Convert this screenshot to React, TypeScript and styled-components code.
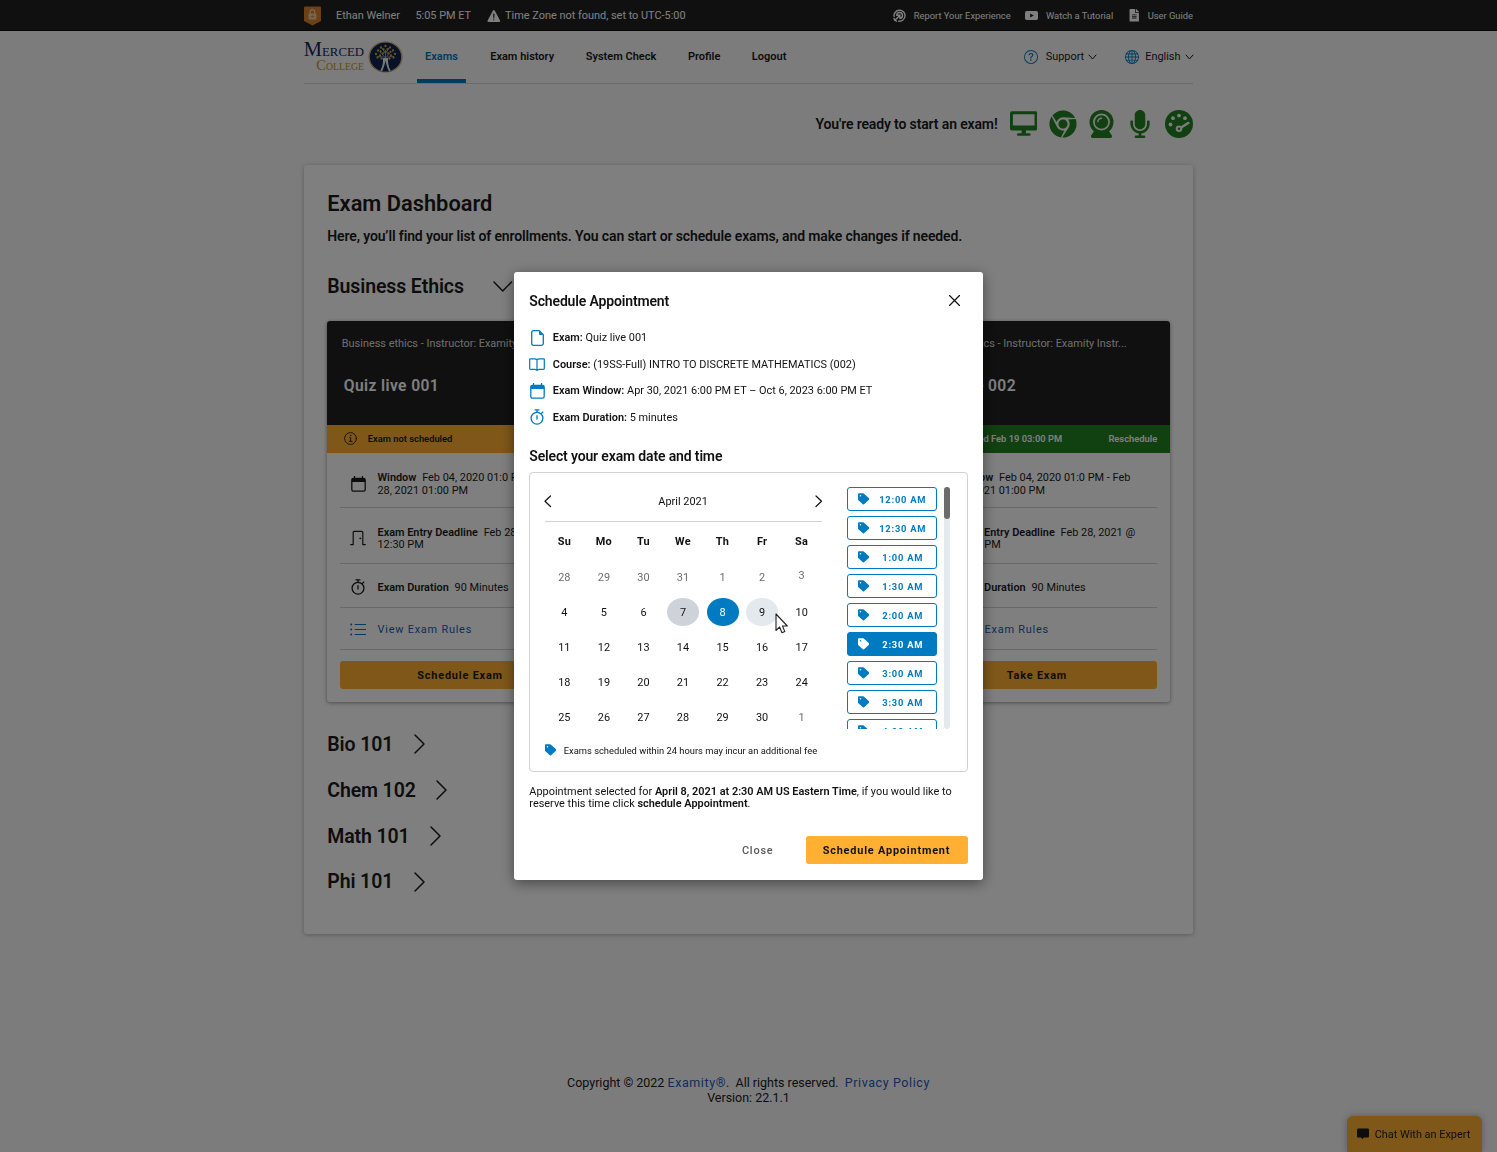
import React from "react";
import styled, { createGlobalStyle, css } from "styled-components";
import { BsQuestionCircle, BsGlobe } from "react-icons/bs";
import { FaChrome, FaFileAlt, FaMicrophone } from "react-icons/fa";
import { IoWarning } from "react-icons/io5";

const blue = "#007ac0";
const amber = "#ffb033";
const green = "#228022";
const ink = "#1a1a1a";
const linkBlue = "#2358b8";

const GlobalStyle = createGlobalStyle`
  * { box-sizing: border-box; }
  body {
    margin: 0;
    background: #f8f8f8;
    font-family: Roboto, "Liberation Sans", sans-serif;
    font-size: 10.92px;
    color: ${ink};
    overflow: hidden;
  }
  button { font-family: inherit; border: 0; margin: 0; padding: 0; background: none; color: inherit; }
  svg { display: block; flex: none; }
`;

const Page = styled.div`
  height: 1152px;
  display: flex;
  flex-direction: column;
`;

const Container = styled.div`
  width: 889px;
  margin: 0 auto;
`;

const TopBar = styled.div`
  height: 31px;
  flex: none;
  background: #212121;
  border-bottom: 1px solid #0c0c0c;
  color: #fff;
`;

const TopInner = styled(Container)`
  height: 31px;
  display: flex;
  align-items: center;
`;

const TopText = styled.span<{ $gap?: number }>`
  margin-right: ${(p) => p.$gap ?? 0}px;
  white-space: nowrap;
`;

const WarningMark = styled(IoWarning)`
  margin: 0 3px 0 -1px;
`;

const TopLinks = styled.div`
  margin-left: auto;
  display: flex;
  align-items: center;
  gap: 14.8px;
  font-size: 9.36px;
`;

const TopLink = styled.a<{ $gap: number }>`
  display: flex;
  align-items: center;
  gap: ${(p) => p.$gap}px;
  white-space: nowrap;
`;

const Header = styled(Container)`
  height: 53px;
  flex: none;
  display: flex;
  border-bottom: 1px solid #d4d4d8;
`;

const Logo = styled.div`
  width: 99px;
  display: flex;
  align-items: center;
  gap: 4px;
`;

const LogoWords = styled.div`
  width: 60px;
  display: flex;
  flex-direction: column;
  align-items: flex-end;
  font-family: "Liberation Serif", serif;
  white-space: nowrap;
`;

const LogoWord = styled.div<{ $gold?: boolean }>`
  color: ${(p) => (p.$gold ? "#c79426" : "#12265c")};
  font-size: ${(p) => (p.$gold ? 9.8 : 12.8)}px;
  line-height: ${(p) => (p.$gold ? 10 : 15)}px;
`;

const LogoCap = styled.span<{ $size: number }>`
  font-size: ${(p) => p.$size}px;
`;

const Nav = styled.nav`
  display: flex;
  margin-left: 14px;
`;

const NavItem = styled.a<{ $active?: boolean; $gap: number }>`
  display: flex;
  align-items: center;
  justify-content: center;
  height: 52px;
  padding: 3px 8px 0;
  margin-right: ${(p) => p.$gap}px;
  font-size: 11px;
  font-weight: 600;
  white-space: nowrap;
  color: ${(p) => (p.$active ? "#0077bd" : ink)};
  border-bottom: 4px solid ${(p) => (p.$active ? "#0077bd" : "transparent")};
`;

const HeaderTools = styled.div`
  margin-left: auto;
  display: flex;
  gap: 28px;
  height: 51px;
  align-items: center;
`;

const Tool = styled.a<{ $gap: number }>`
  display: flex;
  align-items: center;
  & > svg:first-child { color: ${blue}; margin-right: ${(p) => p.$gap}px; }
  & > svg:last-child { margin: 0 0.5px 0 5px; }
`;

const ReadyRow = styled(Container)`
  flex: none;
  height: 81px;
  padding-bottom: 1.5px;
  display: flex;
  align-items: center;
  justify-content: flex-end;
  color: ${green};
`;

const ReadyText = styled.span`
  font-size: 14px;
  font-weight: 600;
  letter-spacing: -0.14px;
  color: ${ink};
  margin-right: 12px;
`;

const ReadyIcons = styled.div`
  display: flex;
  align-items: center;
  justify-content: space-between;
  width: 183.5px;
`;

const MicrophoneMark = styled(FaMicrophone)`
  margin: 0 -1px 0 0.5px;
`;

const Panel = styled(Container)`
  flex: none;
  height: 769px;
  background: #fff;
  border-radius: 3px;
  box-shadow: 0 1px 4px rgba(60, 60, 90, 0.35);
  padding: 24px 23.3px 0;
`;

const PageTitle = styled.h1`
  margin: 0;
  font-size: 21.84px;
  line-height: 30px;
  font-weight: 600;
`;

const PageLead = styled.p`
  margin: 9px 0 0;
  font-size: 14px;
  line-height: 16px;
  font-weight: 600;
  letter-spacing: -0.13px;
  white-space: nowrap;
`;

const SectionHead = styled.h2<{ $top: number; $gap: number }>`
  margin: ${(p) => p.$top}px 0 0;
  height: 26px;
  display: flex;
  align-items: center;
  gap: ${(p) => p.$gap}px;
  font-size: 19.5px;
  letter-spacing: -0.12px;
  font-weight: 600;
`;

const CardGrid = styled.div`
  margin-top: 22px;
  display: grid;
  grid-template-columns: repeat(3, 265.5px);
  justify-content: space-between;
`;

const Card = styled.article<{ $column: number }>`
  grid-column: ${(p) => p.$column};
  height: 380.5px;
  border-radius: 3px;
  overflow: hidden;
  box-shadow: 0 1px 4px rgba(0, 0, 0, 0.4);
`;

const CardTop = styled.div`
  height: 104px;
  background: #212121;
  color: #fff;
  padding: 16px 14.5px 0;
`;

const CardCourse = styled.div`
  line-height: 14px;
  white-space: nowrap;
  color: #ddd;
`;

const CardTitle = styled.h3`
  margin: 24px 0 0 2px;
  font-size: 15.6px;
  line-height: 22px;
  font-weight: 600;
  letter-spacing: 0.4px;
`;

const Status = styled.div<{ $scheduled?: boolean }>`
  height: 28px;
  display: flex;
  align-items: center;
  padding: 0 12.5px 1px 16.5px;
  font-size: 9.36px;
  font-weight: 600;
  white-space: nowrap;
  background: ${(p) => (p.$scheduled ? green : amber)};
  color: ${(p) => (p.$scheduled ? "#fff" : ink)};
  & > svg { margin-right: 11px; }
`;

const StatusAction = styled.span`
  margin-left: auto;
`;

const CardBody = styled.div`
  padding: 0 12.5px;
`;

const CardRow = styled.div<{ $height: number; $drop: number }>`
  height: ${(p) => p.$height}px;
  padding: ${(p) => p.$drop}px 0 0 10px;
  border-bottom: 1px solid #d0d0d0;
  display: flex;
  align-items: center;
  line-height: 12.4px;
`;

const RowIcon = styled.span<{ $lift?: number; $tint?: string }>`
  width: 16.5px;
  margin: 0 11.2px ${(p) => p.$lift ?? 0}px 0;
  display: flex;
  justify-content: center;
  color: ${(p) => p.$tint ?? ink};
`;

const Label = styled.b`
  font-weight: 600;
  margin-right: 5.8px;
`;

const RulesLink = styled.a`
  color: ${linkBlue};
  letter-spacing: 0.78px;
`;

const CardButton = styled.button`
  width: 100%;
  height: 28px;
  margin-top: 11.5px;
  background: ${amber};
  border-radius: 3px;
  font-size: 10.92px;
  font-weight: 700;
  letter-spacing: 0.8px;
`;

const Footer = styled.footer`
  margin-top: 141px;
  text-align: center;
  font-size: 12.48px;
  line-height: 15px;
`;

const FooterLink = styled.a`
  color: ${linkBlue};
  letter-spacing: 0.6px;
`;

const ChatTab = styled.button`
  position: fixed;
  right: 15.5px;
  bottom: 0;
  width: 135px;
  height: 36px;
  display: flex;
  align-items: center;
  justify-content: center;
  gap: 6px;
  padding-right: 1px;
  border-radius: 6px 6px 0 0;
  background: ${amber};
  color: ${ink};
  font-size: 10.92px;
  box-shadow: 0 0 6px rgba(40, 50, 90, 0.35);
`;

const Backdrop = styled.div`
  position: fixed;
  inset: 0;
  background: rgba(0, 0, 0, 0.5);
  display: flex;
  align-items: center;
  justify-content: center;
`;

const Dialog = styled.div`
  width: 469px;
  height: 608px;
  background: #fff;
  border-radius: 3px;
  box-shadow: 0 3px 14px rgba(0, 0, 0, 0.45);
  padding: 17.5px 15.5px 0 15.3px;
  color: #111;
`;

const DialogHead = styled.div`
  height: 22px;
  display: flex;
  align-items: center;
  justify-content: space-between;
  padding-right: 7.5px;
`;

const DialogTitle = styled.h2`
  margin: 0;
  font-size: 14px;
  font-weight: 600;
  letter-spacing: -0.15px;
`;

const Facts = styled.div`
  margin-top: 13px;
  display: grid;
  grid-auto-rows: 26.5px;
`;

const Fact = styled.div`
  display: flex;
  align-items: center;
  white-space: pre;
`;

const FactIcon = styled.span`
  width: 15.6px;
  margin-right: 7.9px;
  display: flex;
  justify-content: center;
  color: ${blue};
`;

const Strong = styled.b`
  font-weight: 600;
`;

const PickHeading = styled.h3`
  margin: 15px 0 0;
  font-size: 14px;
  line-height: 20px;
  font-weight: 600;
  letter-spacing: -0.15px;
`;

const Picker = styled.div`
  margin-top: 6.2px;
  height: 300px;
  border: 1px solid #d2d2d2;
  border-radius: 4px;
  padding: 14.2px 16px 0 14.3px;
`;

const PickerMain = styled.div`
  display: flex;
  height: 242.5px;
`;

const Calendar = styled.div`
  width: 277.5px;
  margin-right: 24.7px;
`;

const MonthBar = styled.div`
  height: 35.5px;
  display: flex;
  align-items: center;
  justify-content: space-between;
  padding: 0 1px 5px 0.5px;
  border-bottom: 1px solid #d2d2d2;
`;

const Week = styled.div<{ $head?: boolean }>`
  display: grid;
  grid-template-columns: repeat(7, 39.55px);
  height: ${(p) => (p.$head ? 37.2 : 35.1)}px;
  ${(p) =>
    p.$head &&
    css`
      padding-top: 1.5px;
      font-weight: 700;
      letter-spacing: 0.3px;
    `}
`;

const Cell = styled.div`
  display: flex;
  align-items: center;
  justify-content: center;
  position: relative;
`;

type Tone = "plain" | "muted" | "today" | "selected" | "hover";
const toneFill: Record<Tone, string> = {
  plain: "transparent",
  muted: "transparent",
  today: "#ced3da",
  selected: blue,
  hover: "#e4e9ee",
};

const Day = styled.button<{ $tone: Tone; $raise?: boolean }>`
  width: 32px;
  height: 27.5px;
  border-radius: 50%;
  font-size: 10.92px;
  background: ${(p) => toneFill[p.$tone]};
  color: ${(p) => (p.$tone === "selected" ? "#fff" : p.$tone === "muted" ? "#6d6d6d" : "#111")};
  ${(p) => p.$raise && "margin-bottom: 3px;"}
`;

const Cursor = styled.svg`
  position: absolute;
  left: 32.7px;
  top: 18px;
  z-index: 1;
`;

const Times = styled.div`
  width: 90px;
  height: 242px;
  overflow: hidden;
  display: flex;
  flex-direction: column;
  gap: 4.5px;
`;

const TimeSlot = styled.button<{ $on?: boolean }>`
  flex: none;
  height: 24.5px;
  border: 1px solid ${blue};
  border-radius: 3px;
  background: ${(p) => (p.$on ? blue : "#fff")};
  color: ${(p) => (p.$on ? "#fff" : blue)};
  display: flex;
  align-items: center;
  padding: 0 1px 0 10px;
  font-size: 9.36px;
  font-weight: 700;
  letter-spacing: 0.78px;
`;

const SlotTime = styled.span`
  flex: 1;
  padding-left: 1.5px;
  text-align: center;
`;

const Track = styled.div`
  width: 6px;
  height: 242px;
  margin-left: 7.3px;
  border-radius: 3px;
  background: #e4e9ee;
`;

const Thumb = styled.div`
  height: 32px;
  border-radius: 3px;
  background: #6b6b6b;
`;

const FeeNote = styled.div`
  margin-top: 13.7px;
  display: flex;
  align-items: center;
  gap: 7.7px;
  font-size: 9.36px;
  height: 14px;
  color: #111;
`;

const FeeMark = styled.span`
  color: ${blue};
`;

const Summary = styled.p`
  margin: 14.3px 0 0;
  line-height: 12.5px;
  white-space: nowrap;
`;

const Actions = styled.div`
  margin-top: 25.2px;
  display: flex;
  justify-content: flex-end;
  gap: 32px;
`;

const ActionButton = styled.button<{ $primary?: boolean }>`
  height: 28px;
  width: ${(p) => (p.$primary ? "162px" : "auto")};
  border-radius: 3px;
  font-size: 10.92px;
  font-weight: ${(p) => (p.$primary ? 700 : 500)};
  letter-spacing: 0.8px;
  background: ${(p) => (p.$primary ? amber : "none")};
  color: ${(p) => (p.$primary ? "#111" : "#5a5a5a")};
`;

type Direction = "left" | "right" | "down";
const chevronPaths: Record<Direction, string> = {
  left: "M1 0 L0 .5 L1 1",
  right: "M0 0 L1 .5 L0 1",
  down: "M0 0 L.5 1 L1 0",
};

function Chevron({ dir, w, h, stroke = 1.2 }: { dir: Direction; w: number; h: number; stroke?: number }) {
  return (
    <svg width={w} height={h} overflow="visible">
      <path
        d={chevronPaths[dir]}
        transform={`scale(${w} ${h})`}
        fill="none"
        stroke="currentColor"
        strokeWidth={stroke}
        vectorEffect="non-scaling-stroke"
        strokeLinecap="round"
        strokeLinejoin="round"
      />
    </svg>
  );
}

const Shield = styled.svg`
  margin-right: 15px;
`;

const ShieldIcon = () => (
  <Shield width="17" height="20" viewBox="0 0 17 20">
    <path d="M0 1.5Q0 .5 1 .5H16Q17 .5 17 1.5V15L8.5 19.5L0 15Z" fill="#d9822c" />
    <path d="M6.2 8V6a2.300 2.300 0 0 1 4.600 0V8" fill="none" stroke="#e8cfae" strokeWidth="1.200" />
    <rect x="4.600" y="7.600" width="7.800" height="6" rx="1" fill="#e8cfae" />
    <path d="M8.500 9.200v2.600M6.500 10.600h4" stroke="#d9822c" strokeWidth=".8" />
  </Shield>
);

const ReportIcon = () => (
  <svg width="13" height="13" viewBox="0 0 13 13" fill="none" stroke="#fff" strokeWidth="1.400" strokeLinecap="round">
    <path d="M1.100 7.500A5.500 5.500 0 1 1 5.600 12.100" />
    <path d="M3.700 6.300A2.900 2.900 0 1 1 7 9.300" />
    <path d="M6.700 6.500L2.200 11M4.300 6.300H6.900V8.800" />
    <path d="M1 9.600L1.800 11.300L3.500 12.100" />
  </svg>
);

const VideoIcon = () => (
  <svg width="13" height="9" viewBox="0 0 13 9">
    <rect width="13" height="9" rx="1.800" fill="#fff" />
    <path d="M5.100 2.400L8.900 4.500L5.100 6.600Z" fill="#212121" />
  </svg>
);

const canopy: [number, number][] = [
  [8, 13], [10, 9.500], [13, 6.500], [17.500, 5], [22, 6.500], [25, 9.500], [27, 13], [9.500, 16.500], [25.500, 16.500],
  [12.500, 10.500], [15.500, 8.300], [19.500, 8.200], [22.500, 10.800], [12, 14.500], [23, 14.500], [15, 12.300], [20.200, 12.400],
  [17.500, 10.500], [13.500, 17.500], [21.500, 17.500],
];

const CrestIcon = () => (
  <svg width="35" height="32" viewBox="0 0 35 32">
    <ellipse cx="17.500" cy="16" rx="17" ry="15.600" fill="#c7a24a" />
    <ellipse cx="17.500" cy="16" rx="16.300" ry="15" fill="#d9cda4" />
    <ellipse cx="17.500" cy="16" rx="15.700" ry="14.500" fill="#0f2350" />
    <path d="M12.300 29.800C15 25 15.300 21 14.800 17h5.400C19.700 21 20 25 22.700 29.800Q17.500 31.300 12.300 29.800Z" fill="#f0f0f0" />
    <path d="M17.500 19.500C16.900 23 16.200 26 14 30.400H21C18.800 26 18.100 23 17.500 19.500Z" fill="#0f2350" />
    <path
      d="M17.500 18V9M17.500 17L12 11M17.500 17L23 11M15.500 16L9 15.500M19.500 16L26 15.500M17 12L14 7M18 12L21 7"
      stroke="#cfcfd6"
      strokeWidth=".7"
    />
    {canopy.map(([x, y]) => (
      <circle key={`${x}-${y}`} cx={x} cy={y} r="1.150" fill="#c9a43a" />
    ))}
  </svg>
);

const MonitorIcon = () => (
  <svg width="27.500" height="25" viewBox="0 0 28 25">
    <path
      fillRule="evenodd"
      d="M2 0H26Q28 0 28 2V17.500Q28 19.500 26 19.500H16.200V22.300H19.500Q21 22.300 21 23.700T19.500 25H8.500Q7 25 7 23.700T8.500 22.300H11.800V19.500H2Q0 19.500 0 17.500V2Q0 0 2 0ZM3 3V14.500H25V3Z"
      fill="currentColor"
    />
  </svg>
);

const WebcamIcon = () => (
  <svg width="25" height="28" viewBox="0 0 25 28">
    <path d="M5.500 20.500L2.300 25.300Q1.200 28 3.800 28H21.200Q23.800 28 22.700 25.300L19.500 20.500Z" fill="currentColor" />
    <circle cx="12.500" cy="12" r="12" fill="currentColor" />
    <circle cx="12.500" cy="12" r="7.600" fill="none" stroke="#f8f8f8" strokeWidth="1.700" />
    <path d="M8.900 11.800A3.600 3.600 0 0 1 12.500 8.200" fill="none" stroke="#f8f8f8" strokeWidth="1.500" strokeLinecap="round" />
  </svg>
);

const GaugeIcon = () => (
  <svg width="28" height="28" viewBox="0 0 28 28">
    <circle cx="14" cy="14" r="14" fill="currentColor" />
    <g fill="#f8f8f8">
      <circle cx="5.500" cy="14.500" r="1.900" />
      <circle cx="8" cy="8.200" r="1.900" />
      <circle cx="14" cy="5.600" r="1.900" />
      <circle cx="20" cy="8.200" r="1.900" />
      <circle cx="14" cy="18.800" r="3.300" />
    </g>
    <path d="M14.500 18.500L23.300 13" stroke="#f8f8f8" strokeWidth="2.600" strokeLinecap="round" />
    <circle cx="14" cy="18.800" r="1.200" fill="currentColor" />
  </svg>
);

const CalendarIcon = () => (
  <svg width="15" height="16" viewBox="0 0 15 16">
    <rect x=".8" y="2.300" width="13.400" height="12.900" rx="1.600" fill="none" stroke="currentColor" strokeWidth="1.300" />
    <path d="M1 3.500Q1 2.300 2.200 2.300H12.800Q14 2.300 14 3.500V6H1Z" fill="currentColor" />
    <path d="M3.500 .6V3M11.500 .6V3" stroke="currentColor" strokeWidth="1.300" strokeLinecap="round" />
  </svg>
);

const StopwatchIcon = () => (
  <svg width="14" height="16" viewBox="0 0 14 16" fill="none" stroke="currentColor" strokeWidth="1.300" strokeLinecap="round">
    <circle cx="7" cy="9.200" r="5.900" />
    <path d="M5 .8H9M7 .8V3M7 6.600V10M11.500 4.200L12.900 3.100" />
  </svg>
);

const DoorIcon = () => (
  <svg width="16" height="16" viewBox="0 0 16 16" fill="none" stroke="currentColor" strokeWidth="1.200" strokeLinecap="round">
    <path d="M3.200 14.500V2.300Q3.200 1.300 4.200 1.300H11.800Q12.800 1.300 12.800 2.300V14.500M.7 14.600H3.200M12.800 14.600H15.300" />
    <circle cx="10.200" cy="8.300" r=".5" fill="currentColor" strokeWidth=".8" />
  </svg>
);

const RulesIcon = () => (
  <svg width="16" height="13" viewBox="0 0 16 13">
    <path d="M5.200 1.500H15.500M5.200 6.500H15.500M5.200 11.500H15.500" stroke="currentColor" strokeWidth="1.200" strokeLinecap="round" />
    <circle cx="1.200" cy="1.500" r="1" fill="currentColor" />
    <circle cx="1.200" cy="6.500" r="1" fill="currentColor" />
    <circle cx="1.200" cy="11.500" r="1" fill="currentColor" />
  </svg>
);

const InfoIcon = () => (
  <svg width="13" height="13" viewBox="0 0 13 13" fill="none" stroke="currentColor" strokeWidth=".9" strokeLinecap="round">
    <circle cx="6.500" cy="6.500" r="5.900" />
    <path d="M5.500 5.700H6.700V9.300M5.200 9.400H8" />
    <circle cx="6.500" cy="3.600" r=".45" fill="currentColor" strokeWidth=".5" />
  </svg>
);

const FileIcon = () => (
  <svg width="13" height="16" viewBox="0 0 13 16">
    <path d="M2.500 .7H8.200L12.300 4.800V13.500Q12.300 15.300 10.500 15.300H2.500Q.7 15.300 .7 13.500V2.500Q.7 .7 2.500 .7Z" fill="none" stroke="currentColor" strokeWidth="1.300" />
    <path d="M8 .7V4Q8 5 9 5H12.400Z" fill="currentColor" />
  </svg>
);

const BookIcon = () => (
  <svg width="16" height="13" viewBox="0 0 16 13" fill="none" stroke="currentColor" strokeWidth="1.200" strokeLinejoin="round">
    <path d="M8 2Q7.300 .8 5.500 .8H1.500Q.7 .8 .7 1.600V10.500Q.7 11.300 1.500 11.300H5.500Q7.300 11.300 8 12.300Q8.700 11.300 10.500 11.300H14.500Q15.300 11.300 15.300 10.500V1.600Q15.300 .8 14.500 .8H10.500Q8.700 .8 8 2ZM8 2V12" />
  </svg>
);

const TagIcon = ({ hole = "#fff" }: { hole?: string }) => (
  <svg width="11.500" height="12" viewBox="0 0 12 12">
    <path
      d="M.9 0H5.300Q5.700 0 6 .3L11.700 5.500Q12.200 6 11.700 6.500L6.300 11.600Q5.700 12.100 5.100 11.600L.4 7.300Q0 6.900 0 6.400V.9Q0 0 .9 0Z"
      fill="currentColor"
    />
    <circle cx="2.600" cy="2.600" r=".8" fill={hole} />
  </svg>
);

const ChatIcon = () => (
  <svg width="12" height="12" viewBox="0 0 12 12">
    <path d="M1.200 .5H10.800Q12 .5 12 1.700V8.300Q12 9.500 10.800 9.500H6.800L5.500 11.200L4.200 9.500H1.200Q0 9.500 0 8.300V1.700Q0 .5 1.200 .5Z" fill="currentColor" />
  </svg>
);

const CloseIcon = () => (
  <svg width="11" height="11" viewBox="0 0 11 11">
    <path d="M.5 .5L10.500 10.500M10.500 .5L.5 10.500" stroke="#111" strokeWidth="1.200" strokeLinecap="round" />
  </svg>
);

interface ExamCardProps {
  column: number;
  title: string;
  action: string;
  scheduled?: boolean;
}

function ExamCard({ column, title, action, scheduled }: ExamCardProps) {
  return (
    <Card $column={column}>
      <CardTop>
        <CardCourse>Business ethics - Instructor: Examity Instr...</CardCourse>
        <CardTitle>{title}</CardTitle>
      </CardTop>
      <Status $scheduled={scheduled}>
        <InfoIcon />
        {scheduled ? "Scheduled Feb 19 03:00 PM" : "Exam not scheduled"}
        {scheduled && <StatusAction>Reschedule</StatusAction>}
      </Status>
      <CardBody>
        <CardRow $height={54.5} $drop={9.5}>
          <RowIcon $lift={1}><CalendarIcon /></RowIcon>
          <div>
            <Label>Window</Label>Feb 04, 2020 01:0 PM - Feb
            <br />
            28, 2021 01:00 PM
          </div>
        </CardRow>
        <CardRow $height={56} $drop={8}>
          <RowIcon $lift={2}><DoorIcon /></RowIcon>
          <div>
            <Label>Exam Entry Deadline</Label>Feb 28, 2021 @
            <br />
            12:30 PM
          </div>
        </CardRow>
        <CardRow $height={44} $drop={6.5}>
          <RowIcon $lift={2}><StopwatchIcon /></RowIcon>
          <div>
            <Label>Exam Duration</Label>90 Minutes
          </div>
        </CardRow>
        <CardRow $height={42} $drop={5}>
          <RowIcon $lift={1.5} $tint={blue}><RulesIcon /></RowIcon>
          <RulesLink>View Exam Rules</RulesLink>
        </CardRow>
        <CardButton>{action}</CardButton>
      </CardBody>
    </Card>
  );
}

const weeks: number[][] = [
  [28, 29, 30, 31, 1, 2, 3],
  [4, 5, 6, 7, 8, 9, 10],
  [11, 12, 13, 14, 15, 16, 17],
  [18, 19, 20, 21, 22, 23, 24],
  [25, 26, 27, 28, 29, 30, 1],
];

function toneFor(week: number, day: number): Tone {
  if (week === 0 || (week === 4 && day === 1)) return "muted";
  if (day === 7) return "today";
  if (day === 8) return "selected";
  if (day === 9) return "hover";
  return "plain";
}

const slots = ["12:00 AM", "12:30 AM", "1:00 AM", "1:30 AM", "2:00 AM", "2:30 AM", "3:00 AM", "3:30 AM", "4:00 AM"];

function AppointmentDialog() {
  return (
    <Dialog role="dialog">
      <DialogHead>
        <DialogTitle>Schedule Appointment</DialogTitle>
        <CloseIcon />
      </DialogHead>
      <Facts>
        <Fact><FactIcon><FileIcon /></FactIcon><Strong>Exam:</Strong> Quiz live 001</Fact>
        <Fact><FactIcon><BookIcon /></FactIcon><Strong>Course:</Strong> (19SS-Full) INTRO TO DISCRETE MATHEMATICS (002)</Fact>
        <Fact><FactIcon><CalendarIcon /></FactIcon><Strong>Exam Window:</Strong> Apr 30, 2021 6:00 PM ET – Oct 6, 2023 6:00 PM ET</Fact>
        <Fact><FactIcon><StopwatchIcon /></FactIcon><Strong>Exam Duration:</Strong> 5 minutes</Fact>
      </Facts>
      <PickHeading>Select your exam date and time</PickHeading>
      <Picker>
        <PickerMain>
          <Calendar>
            <MonthBar>
              <Chevron dir="left" w={5.5} h={10.5} />
              April 2021
              <Chevron dir="right" w={5.5} h={10.5} />
            </MonthBar>
            <Week $head>
              {["Su", "Mo", "Tu", "We", "Th", "Fr", "Sa"].map((d) => (
                <Cell key={d}>{d}</Cell>
              ))}
            </Week>
            {weeks.map((week, w) => (
              <Week key={w}>
                {week.map((day) => (
                  <Cell key={day}>
                    <Day $tone={toneFor(w, day)} $raise={w === 0 && day === 3}>{day}</Day>
                    {day === 9 && (
                      <Cursor width="14" height="21" viewBox="0 0 14 21">
                        <path
                          d="M1 1V17.500L4.600 14L7 19.800L9.800 18.600L7.500 13H12.300Z"
                          fill="#fff"
                          stroke="#222"
                          strokeWidth="1.100"
                          strokeLinejoin="round"
                        />
                      </Cursor>
                    )}
                  </Cell>
                ))}
              </Week>
            ))}
          </Calendar>
          <Times>
            {slots.map((time) => {
              const on = time === "2:30 AM";
              return (
                <TimeSlot key={time} $on={on}>
                  <TagIcon hole={on ? blue : "#fff"} />
                  <SlotTime>{time}</SlotTime>
                </TimeSlot>
              );
            })}
          </Times>
          <Track><Thumb /></Track>
        </PickerMain>
        <FeeNote>
          <FeeMark><TagIcon /></FeeMark>
          Exams scheduled within 24 hours may incur an additional fee
        </FeeNote>
      </Picker>
      <Summary>
        Appointment selected for <Strong>April 8, 2021 at 2:30 AM US Eastern Time</Strong>, if you would like to
        <br />
        reserve this time click <Strong>schedule Appointment</Strong>.
      </Summary>
      <Actions>
        <ActionButton>Close</ActionButton>
        <ActionButton $primary>Schedule Appointment</ActionButton>
      </Actions>
    </Dialog>
  );
}

export default function App() {
  return (
    <>
      <GlobalStyle />
      <Page>
        <TopBar>
          <TopInner>
            <ShieldIcon />
            <TopText $gap={15.5}>Ethan Welner</TopText>
            <TopText $gap={16}>5:05 PM ET</TopText>
            <WarningMark size={16} />
            <TopText>Time Zone not found, set to UTC-5:00</TopText>
            <TopLinks>
              <TopLink $gap={8}><ReportIcon />Report Your Experience</TopLink>
              <TopLink $gap={7.5}><VideoIcon />Watch a Tutorial</TopLink>
              <TopLink $gap={7.2}><FaFileAlt size={12.5} />User Guide</TopLink>
            </TopLinks>
          </TopInner>
        </TopBar>
        <Header>
          <Logo>
            <LogoWords>
              <LogoWord><LogoCap $size={20.5}>M</LogoCap>ERCED</LogoWord>
              <LogoWord $gold><LogoCap $size={14.5}>C</LogoCap>OLLEGE</LogoWord>
            </LogoWords>
            <CrestIcon />
          </Logo>
          <Nav>
            <NavItem $active $gap={16.3}>Exams</NavItem>
            <NavItem $gap={15.6}>Exam history</NavItem>
            <NavItem $gap={15.7}>System Check</NavItem>
            <NavItem $gap={15.5}>Profile</NavItem>
            <NavItem $gap={0}>Logout</NavItem>
          </Nav>
          <HeaderTools>
            <Tool $gap={8}><BsQuestionCircle size={14} />Support<Chevron dir="down" w={7} h={4} stroke={1} /></Tool>
            <Tool $gap={6.5}><BsGlobe size={14} />English<Chevron dir="down" w={7} h={4} stroke={1} /></Tool>
          </HeaderTools>
        </Header>
        <ReadyRow>
          <ReadyText>You're ready to start an exam!</ReadyText>
          <ReadyIcons>
            <MonitorIcon />
            <FaChrome size={28} />
            <WebcamIcon />
            <MicrophoneMark size={28} />
            <GaugeIcon />
          </ReadyIcons>
        </ReadyRow>
        <Panel>
          <PageTitle>Exam Dashboard</PageTitle>
          <PageLead>Here, you’ll find your list of enrollments. You can start or schedule exams, and make changes if needed.</PageLead>
          <SectionHead $top={29} $gap={30}>Business Ethics<Chevron dir="down" w={17.5} h={9} stroke={1.5} /></SectionHead>
          <CardGrid>
            <ExamCard column={1} title="Quiz live 001" action="Schedule Exam" />
            <ExamCard column={3} title="Quiz live 002" action="Take Exam" scheduled />
          </CardGrid>
          <SectionHead $top={29.5} $gap={21.5}>Bio 101<Chevron dir="right" w={9} h={18} stroke={1.5} /></SectionHead>
          <SectionHead $top={20} $gap={21}>Chem 102<Chevron dir="right" w={9} h={18} stroke={1.5} /></SectionHead>
          <SectionHead $top={20} $gap={21}>Math 101<Chevron dir="right" w={9} h={18} stroke={1.5} /></SectionHead>
          <SectionHead $top={19.5} $gap={21.5}>Phi 101<Chevron dir="right" w={9} h={18} stroke={1.5} /></SectionHead>
        </Panel>
        <Footer>
          Copyright © 2022 <FooterLink>Examity®</FooterLink>.&nbsp; All rights reserved.&nbsp; <FooterLink>Privacy Policy</FooterLink>
          <br />
          Version: 22.1.1
        </Footer>
        <ChatTab><ChatIcon />Chat With an Expert</ChatTab>
      </Page>
      <Backdrop>
        <AppointmentDialog />
      </Backdrop>
    </>
  );
}
